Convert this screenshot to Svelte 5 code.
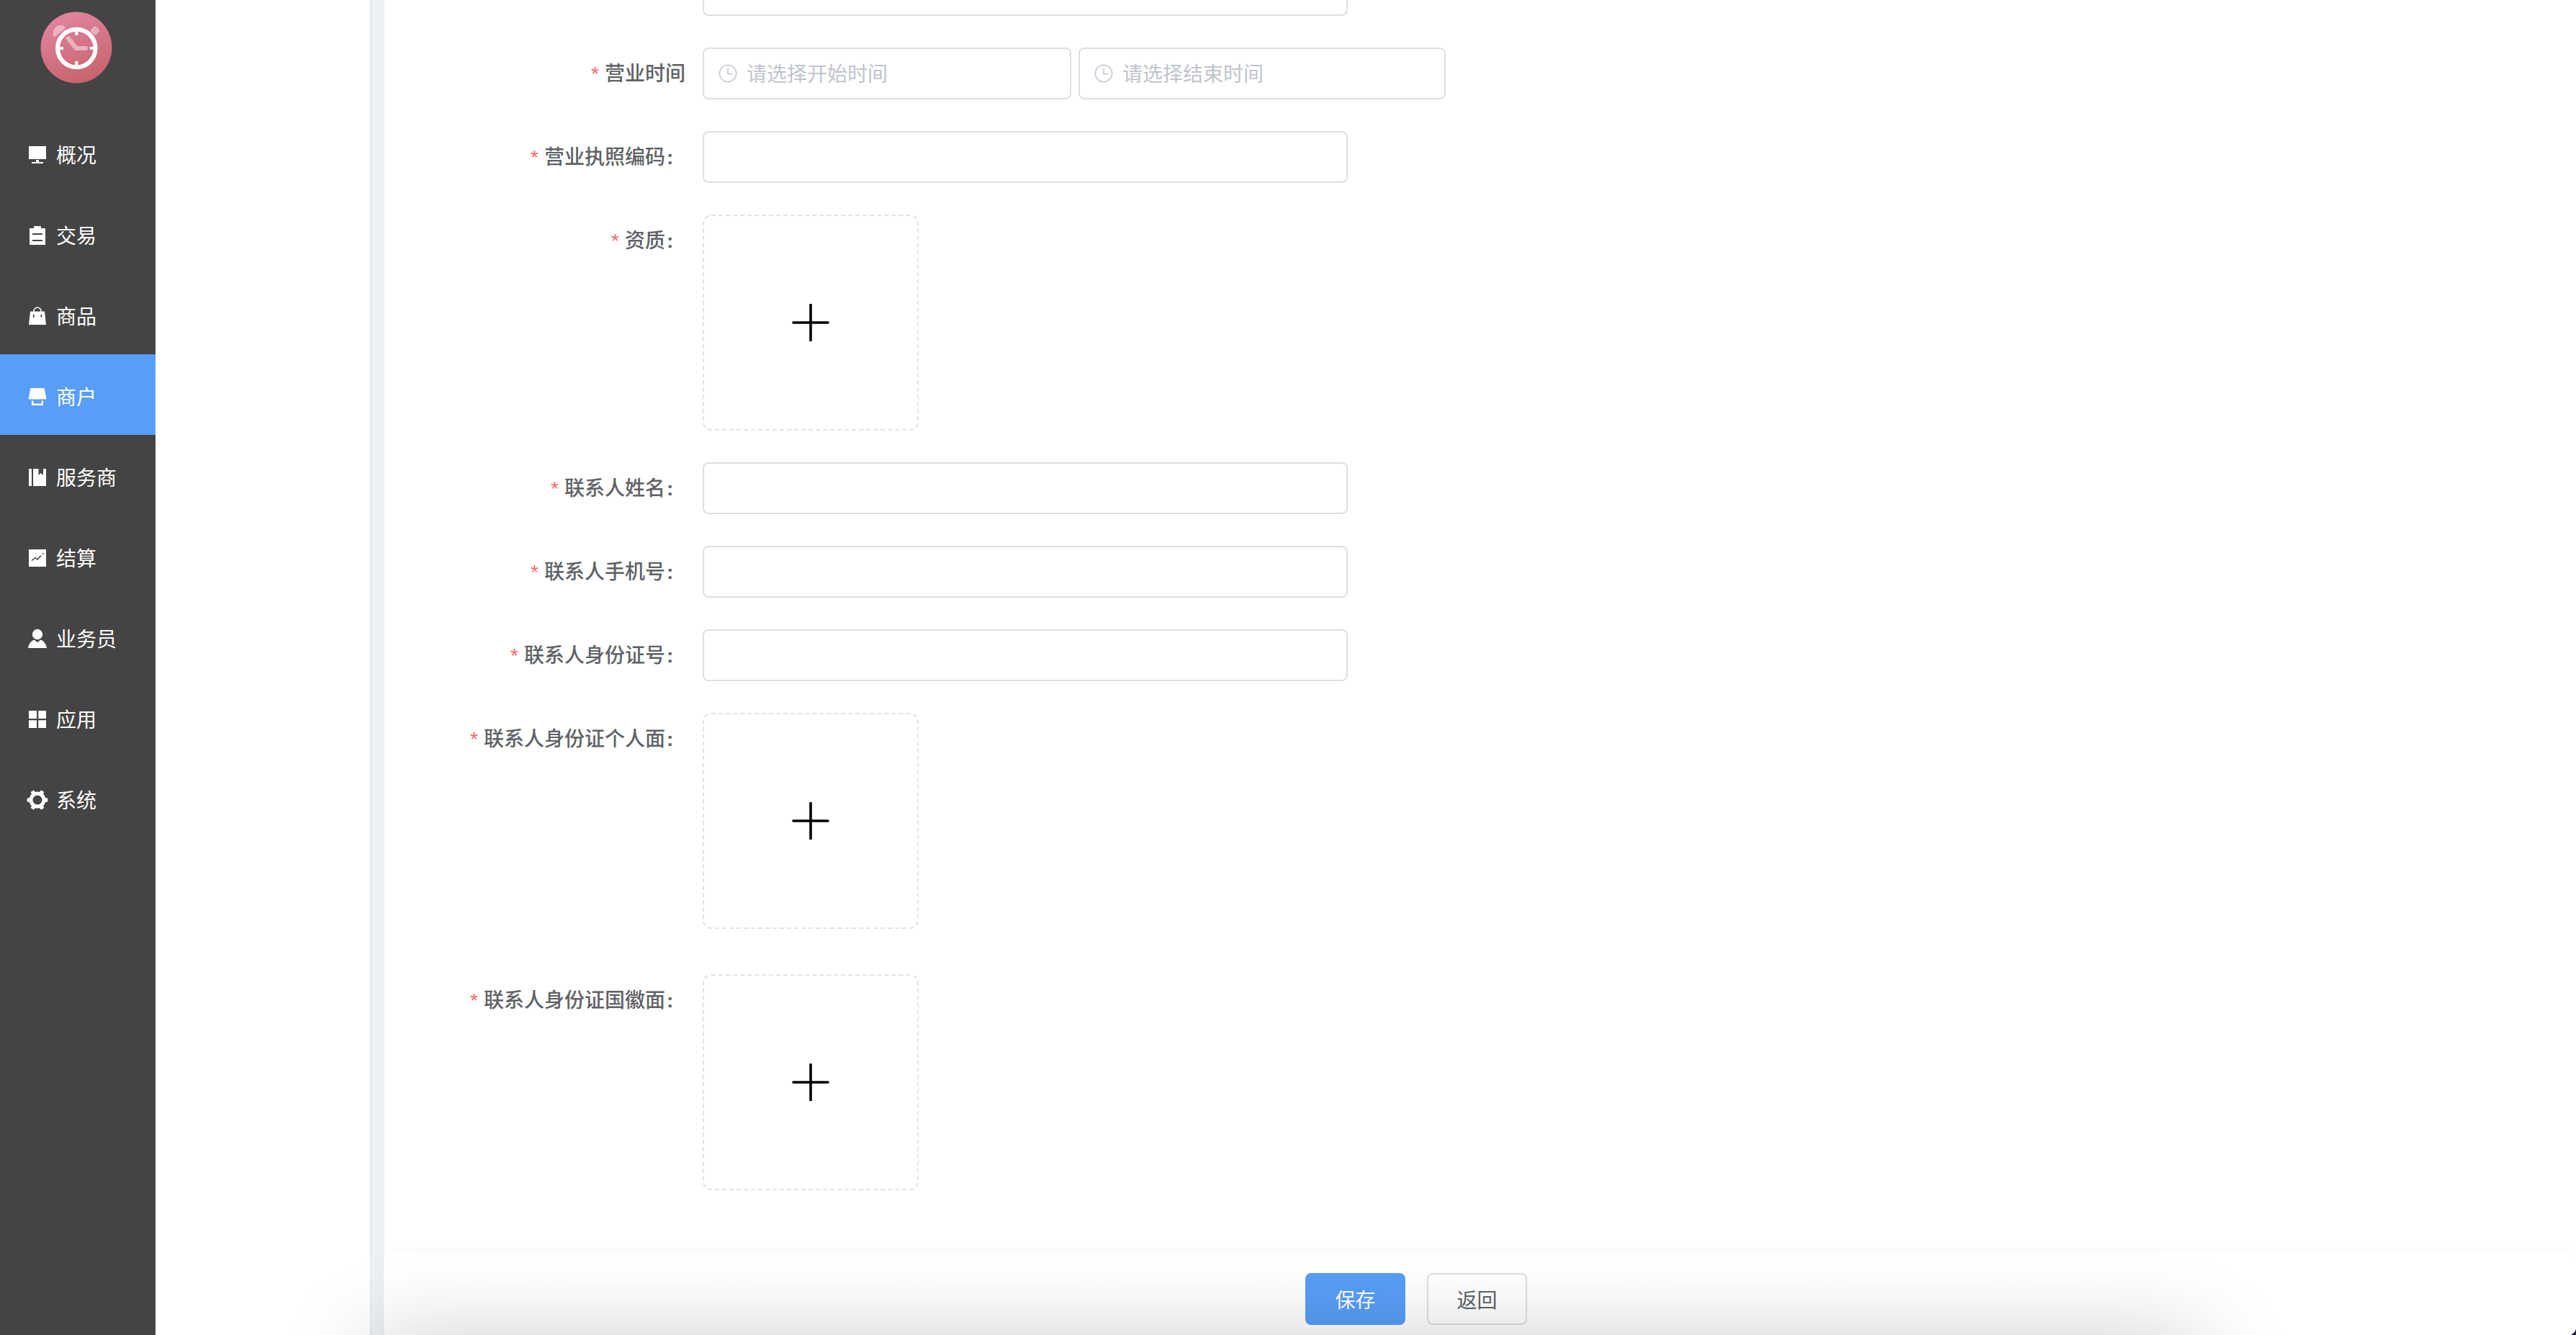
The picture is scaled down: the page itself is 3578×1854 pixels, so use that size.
<script>
  const menu = [
    { key: 'monitor', label: '概况' },
    { key: 'clipboard', label: '交易' },
    { key: 'bag', label: '商品' },
    { key: 'store', label: '商户', active: true },
    { key: 'books', label: '服务商' },
    { key: 'chart', label: '结算' },
    { key: 'user', label: '业务员' },
    { key: 'apps', label: '应用' },
    { key: 'gear', label: '系统' }
  ];
  const teeth = [0, 60, 120, 180, 240, 300];
</script>

{#snippet plus()}
  <div class="upload">
    <svg class="plus" viewBox="0 0 52 52" width="52" height="52" aria-hidden="true">
      <path d="M2 26H50M26 1V51" fill="none" stroke="#000" stroke-width="3.6" stroke-linecap="round" />
    </svg>
  </div>
{/snippet}

{#snippet clock()}
  <svg class="clock" viewBox="0 0 26 26" width="26" height="26" aria-hidden="true">
    <circle cx="13" cy="13" r="11.6" fill="none" stroke="#c8ccd3" stroke-width="1.8" />
    <path d="M13 6V13.6H19.5" fill="none" stroke="#c8ccd3" stroke-width="1.8" />
  </svg>
{/snippet}

<div class="app">
  <aside class="sidebar">
    <div class="brand">
      <svg viewBox="0 0 100 100" width="100" height="100" aria-hidden="true">
        <defs>
          <linearGradient id="logoGrad" x1="0.3" y1="0" x2="0.7" y2="1">
            <stop offset="0" stop-color="#e2859f" />
            <stop offset="1" stop-color="#c6626c" />
          </linearGradient>
        </defs>
        <circle cx="50" cy="50" r="49.5" fill="url(#logoGrad)" />
        <path d="M19 36C15 26 22 18 30 19C32 19 34 21 35 23Z" fill="#fff" fill-opacity="0.42" />
        <rect x="71" y="21.5" width="10" height="10" rx="2" fill="#fff" fill-opacity="0.42" transform="rotate(45 76 26.5)" />
        <circle cx="50.3" cy="51" r="26.3" fill="none" stroke="#fff" stroke-width="6" />
        <path d="M50.3 25V33M50.3 69V77M24 51H32M68.6 51H76.6" stroke="#fff" stroke-width="4" />
        <path d="M50 51L39 37.5M50 51H63" stroke="#fff" stroke-opacity="0.45" stroke-width="6" stroke-linecap="round" fill="none" />
      </svg>
    </div>
    <nav>
      {#each menu as item}
        <div class="item" class:active={item.active}>
          <svg class="icon" viewBox="0 0 24 28" width="24" height="28" aria-hidden="true">
            {#if item.key === 'monitor'}
              <path d="M0 2H24V20H0ZM10 21H14V24H20V26H4V24H10Z" fill="#fff" />
            {:else if item.key === 'clipboard'}
              <path fill-rule="evenodd" d="M7 1H17V4H23V27H1V4H7ZM5 11V13H19V11ZM5 20V22H19V20Z" fill="#fff" />
            {:else if item.key === 'bag'}
              <path d="M7 9V7A5 5 0 0 1 17 7V9" fill="none" stroke="#fff" stroke-width="1.6" />
              <path fill-rule="evenodd" d="M2 7.5H22L24 26H0ZM6 11.7V15.7H7.7V11.7ZM16.6 11.7V15.7H18.3V11.7Z" fill="#fff" />
            {:else if item.key === 'store'}
              <path d="M2.5 2H21.5L24.4 16C24.4 18.2 20.4 18.2 20.2 16.6C20 18.2 16.2 18.2 16.1 16.6C16 18.2 12.1 18.2 12 16.6C11.9 18.2 8 18.2 7.9 16.6C7.8 18.2 4 18.2 3.8 16.6C3.6 18.2 -0.4 18.2 -0.4 16Z" fill="#fff" />
              <path d="M5.2 19.5V24.8H18.8V19.5" fill="none" stroke="#fff" stroke-width="2.4" />
            {:else if item.key === 'books'}
              <path d="M0 2H4V26H0ZM6 2H13.5V11L16.7 8L20 11V2H24V26H6Z" fill="#fff" />
            {:else if item.key === 'chart'}
              <rect x="0" y="2" width="24" height="24" fill="#fff" />
              <path d="M4 17.5L9 13.5L12 16L17 10.5" fill="none" stroke="#444" stroke-width="1.6" />
              <circle cx="19.7" cy="8" r="1.1" fill="#444" />
            {:else if item.key === 'user'}
              <circle cx="12" cy="8" r="7.2" fill="#fff" />
              <path d="M-1 27C0 21.5 2.5 17.5 7.5 15.5L12 19L16.5 15.5C21.5 17.5 24 21.5 25 27Z" fill="#fff" />
            {:else if item.key === 'apps'}
              <path d="M0 2H11V13H0ZM13.3 2H24V13H13.3ZM0 15.3H11V26H0ZM13.3 15.3H24V26H13.3Z" fill="#fff" />
            {:else if item.key === 'gear'}
              <circle cx="12" cy="14" r="9" fill="none" stroke="#fff" stroke-width="5" />
              {#each teeth as angle}
                <rect x="21.5" y="11.3" width="4.8" height="5.4" rx="0.8" fill="#fff" transform="rotate({angle} 12 14)" />
              {/each}
            {/if}
          </svg>
          <span>{item.label}</span>
        </div>
      {/each}
    </nav>
  </aside>

  <div class="subnav"></div>
  <div class="band"></div>

  <main class="content">
    <form class="form">
      <div class="row clipped">
        <div class="label"></div>
        <div class="input"></div>
      </div>
      <div class="row">
        <div class="label"><i>*</i>营业时间</div>
        <div class="times">
          <div class="input time">{@render clock()}<span>请选择开始时间</span></div>
          <div class="input time end">{@render clock()}<span>请选择结束时间</span></div>
        </div>
      </div>
      <div class="row">
        <div class="label"><i>*</i>营业执照编码<b>:</b></div>
        <div class="input"></div>
      </div>
      <div class="row">
        <div class="label"><i>*</i>资质<b>:</b></div>
        {@render plus()}
      </div>
      <div class="row">
        <div class="label"><i>*</i>联系人姓名<b>:</b></div>
        <div class="input"></div>
      </div>
      <div class="row">
        <div class="label"><i>*</i>联系人手机号<b>:</b></div>
        <div class="input"></div>
      </div>
      <div class="row">
        <div class="label"><i>*</i>联系人身份证号<b>:</b></div>
        <div class="input"></div>
      </div>
      <div class="row">
        <div class="label"><i>*</i>联系人身份证个人面<b>:</b></div>
        {@render plus()}
      </div>
      <div class="row last">
        <div class="label"><i>*</i>联系人身份证国徽面<b>:</b></div>
        {@render plus()}
      </div>
    </form>

    <div class="corner"></div>
    <footer class="footer">
      <button type="button" class="btn primary">保存</button>
      <button type="button" class="btn">返回</button>
    </footer>
  </main>

  <div class="bottom-shadow"></div>
</div>

<style>
  :global(body) {
    margin: 0;
    background: #fff;
    overflow: hidden;
  }

  .app {
    position: relative;
    display: flex;
    width: 3578px;
    height: 1854px;
    overflow: hidden;
    font-family: "Noto Sans CJK SC", "Liberation Sans", sans-serif;
    font-size: 28px;
    color: #606266;
  }

  .sidebar {
    flex: 0 0 216px;
    background: #444;
    color: #fff;
  }

  .brand {
    display: flex;
    justify-content: center;
    height: 140px;
    padding-top: 16px;
    margin-left: -4px;
  }

  .item {
    display: flex;
    align-items: center;
    gap: 14px;
    height: 112px;
    padding: 6px 0 0 40px;
    box-sizing: border-box;
    line-height: 1;
  }

  .item.active {
    background: #589ef8;
  }

  .icon {
    flex: none;
    overflow: visible;
  }

  .item span {
    margin-top: -2px;
  }

  .subnav {
    flex: 0 0 298px;
    background: #fff;
  }

  .band {
    flex: 0 0 18px;
    background: #eef2f5;
    border-left: 2px solid #e6e7e9;
  }

  .content {
    position: relative;
    flex: 1;
    min-width: 0;
    background: #fff;
  }

  .form {
    display: flex;
    flex-direction: column;
    gap: 44px;
    margin-top: -50px;
  }

  .row {
    display: flex;
    gap: 24px;
    align-items: flex-start;
  }

  .row.last {
    margin-top: 19px;
  }

  .label {
    flex: 0 0 418px;
    height: 72px;
    line-height: 69px;
    text-align: right;
    font-weight: 500;
    white-space: nowrap;
  }

  .label i {
    margin-right: 8px;
    font-family: "Liberation Sans", sans-serif;
    font-style: normal;
    font-weight: 400;
    color: #f56c6c;
  }

  .label b {
    display: inline-block;
    width: 28px;
    text-align: left;
    text-indent: 2px;
    font-family: "Liberation Sans", sans-serif;
    font-weight: 700;
  }

  .input {
    box-sizing: border-box;
    width: 896px;
    height: 72px;
    background: #fff;
    border: 2px solid #dcdfe6;
    border-radius: 8px;
  }

  .times {
    display: flex;
    gap: 10px;
  }

  .time {
    display: flex;
    align-items: center;
    gap: 13px;
    width: 512px;
    padding-left: 20px;
    color: #c0c4cc;
    line-height: 1;
  }

  .time.end {
    width: 510px;
  }

  .time span {
    margin-top: -3px;
  }

  .clock {
    flex: none;
  }

  .upload {
    display: flex;
    align-items: center;
    justify-content: center;
    box-sizing: border-box;
    width: 300px;
    height: 300px;
    border: 2px dashed #e0e3ec;
    border-radius: 12px;
  }

  .corner {
    position: absolute;
    right: 0;
    bottom: 0;
    width: 6px;
    height: 8px;
    background: #1c1c4e;
  }

  .footer {
    position: absolute;
    left: -1px;
    right: 0;
    bottom: 0;
    display: flex;
    gap: 30px;
    box-sizing: border-box;
    height: 116px;
    padding: 30px 0 0 1280px;
    background: #fff;
    border-radius: 10px;
    box-shadow: 0 0 24px rgba(0, 0, 0, 0.035);
  }

  .btn {
    box-sizing: border-box;
    width: 139px;
    height: 72px;
    padding: 0;
    font-family: inherit;
    font-size: 28px;
    color: #606266;
    background: #fff;
    border: 2px solid #dcdfe6;
    border-radius: 8px;
  }

  .btn.primary {
    color: #fff;
    background: #589ef8;
    border-color: #589ef8;
  }

  .bottom-shadow {
    position: absolute;
    left: 520px;
    top: 1870px;
    width: 2530px;
    height: 100px;
    pointer-events: none;
    box-shadow: 0 0 130px 0 rgba(0, 0, 0, 0.25);
    z-index: 5;
  }
</style>
